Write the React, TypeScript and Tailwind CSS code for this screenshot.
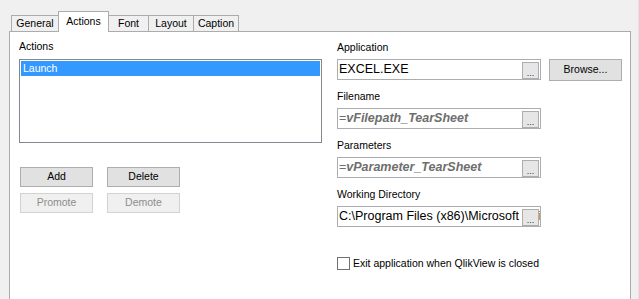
import React from "react";

const TABS = [
  { label: "General", width: "w-[48px]" },
  { label: "Actions", width: "w-[51px]" },
  { label: "Font", width: "w-[41px]" },
  { label: "Layout", width: "w-[46px]" },
  { label: "Caption", width: "w-[46px]" },
];

function Tab({ label, width, active, first }: { label: string; width: string; active: boolean; first: boolean }) {
  return (
    <div
      className={`${width} ${first ? "" : "-ml-px"} flex justify-center border border-b-0 border-[#acacac] ${
        active
          ? "relative z-10 h-[21px] -mb-px bg-white items-start pt-[3px]"
          : "h-[16px] bg-[#f0f0f0] items-center"
      }`}>
      <span className="leading-[13px]">{label}</span>
    </div>
  );
}

function Btn({ children, disabled }: { children: React.ReactNode; disabled?: boolean }) {
  return (
    <div
      className={`w-[73px] h-[20px] flex items-center justify-center border ${
        disabled ? "bg-[#f0f0f0] border-[#d2d2d2] text-[#8d8d8d]" : "bg-[#e1e1e1] border-[#adadad] text-black"
      }`}>
      {children}
    </div>
  );
}

function Ellipsis() {
  return (
    <div className="absolute right-px top-[2px] w-[17px] h-[17px] bg-[#e6e6e6] border border-[#adadad] flex items-end justify-center">
      <span className="text-[9px] leading-[10px] text-[#333]">...</span>
    </div>
  );
}

function Field({ label, children }: { label: string; children: React.ReactNode }) {
  return (
    <div className="flex flex-col">
      <div className="h-[14px] leading-[14px]">{label}</div>
      <div className="mt-[5px] relative w-[204px] h-[21px] border border-[#abadb3] bg-white overflow-hidden">
        <div className="pl-px pr-[20px] h-full flex items-center whitespace-nowrap text-[12.5px] overflow-hidden">{children}</div>
        <Ellipsis />
      </div>
    </div>
  );
}

function VarText({ name }: { name: string }) {
  return (
    <span className="text-[#6e6e6e]">
      =<span className="font-bold italic">{name}</span>
    </span>
  );
}

export default function App() {
  return (
    <div className="w-[639px] h-[299px] overflow-hidden bg-[#f0f0f0] text-[10.5px] text-black font-['Liberation_Sans',Arial,sans-serif] border-r border-[#e2e2e2]">
      <div className="pt-[11px] pl-[9px]">
        <div className="flex items-end pl-[2px] h-[20px]">
          {TABS.map((t, i) => (
            <Tab key={t.label} label={t.label} width={t.width} active={i === 1} first={i === 0} />
          ))}
        </div>
        <div className="w-[622px] h-[300px] bg-white border border-[#acacac] flex">
          <div className="pl-[9px] pt-[7px] w-[313px] flex flex-col">
            <div className="h-[14px] leading-[14px]">Actions</div>
            <div className="mt-[6px] w-[303px] h-[84px] border border-[#828790] p-px">
              <div className="h-[15px] bg-[#3399ff] text-white pl-[2px] leading-[15px]">Launch</div>
            </div>
            <div className="mt-[24px] ml-px flex flex-col gap-[6px]">
              <div className="flex gap-[14px]">
                <Btn>Add</Btn>
                <Btn>Delete</Btn>
              </div>
              <div className="flex gap-[14px]">
                <Btn disabled>Promote</Btn>
                <Btn disabled>Demote</Btn>
              </div>
            </div>
          </div>
          <div className="ml-[14px] pt-[8px] flex flex-col gap-[9px]">
            <div className="flex items-end gap-[8px]">
              <Field label="Application">EXCEL.EXE</Field>
              <div className="w-[73px] h-[22px] mb-[-1px] flex items-center justify-center bg-[#e1e1e1] border border-[#adadad]">
                Browse...
              </div>
            </div>
            <Field label="Filename">
              <VarText name="vFilepath_TearSheet" />
            </Field>
            <Field label="Parameters">
              <VarText name="vParameter_TearSheet" />
            </Field>
            <Field label="Working Directory">C:\Program Files (x86)\Microsoft Office\Office14</Field>
            <div className="mt-[20px] flex items-center gap-[3px]">
              <div className="w-[13px] h-[13px] border border-[#707070] bg-white" />
              <span className="leading-[14px]">Exit application when QlikView is closed</span>
            </div>
          </div>
        </div>
      </div>
    </div>
  );
}
